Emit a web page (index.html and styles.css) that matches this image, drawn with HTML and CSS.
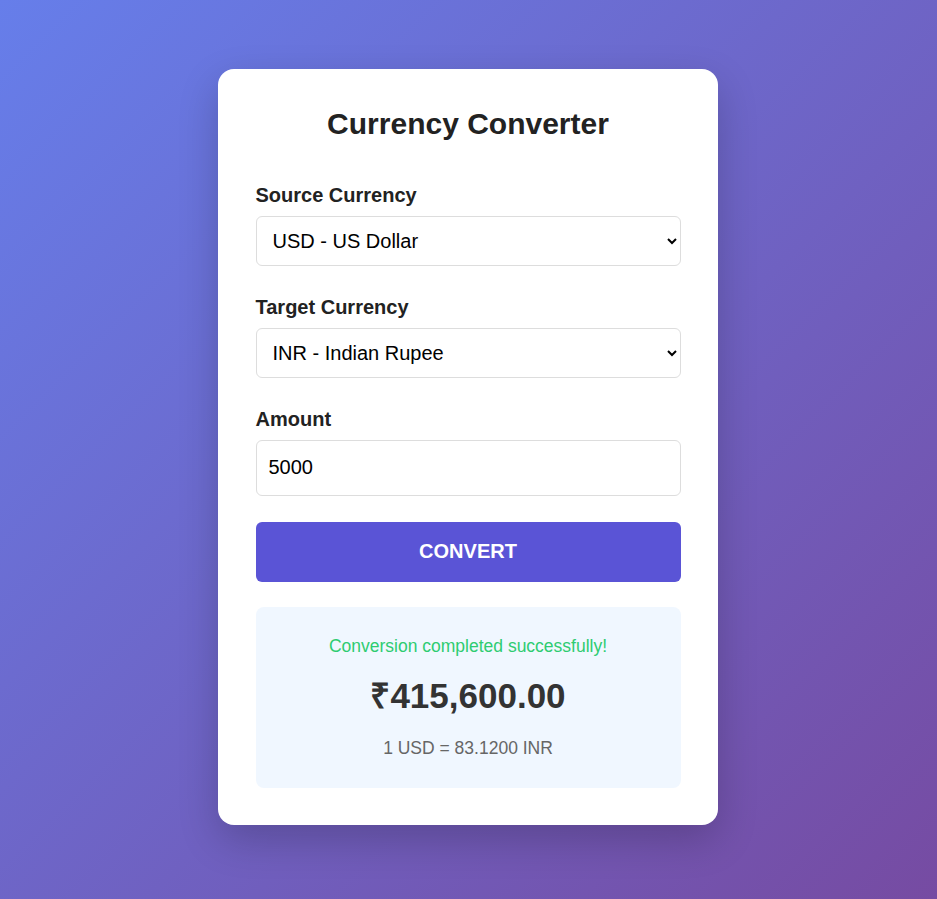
FILE: index.html
```html
<!DOCTYPE html>
<html lang="en">
<head>
<meta charset="utf-8">
<title>Currency Converter</title>
<link rel="stylesheet" href="styles.css">
</head>
<body>
<main class="card">
  <h1 class="title">Currency Converter</h1>
  <div class="field">
    <label class="label" for="src">Source Currency</label>
    <select class="select" id="src">
      <option>USD - US Dollar</option>
      <option>EUR - Euro</option>
      <option>INR - Indian Rupee</option>
    </select>
  </div>
  <div class="field">
    <label class="label" for="tgt">Target Currency</label>
    <select class="select" id="tgt">
      <option>INR - Indian Rupee</option>
      <option>USD - US Dollar</option>
      <option>EUR - Euro</option>
    </select>
  </div>
  <div class="field field-last">
    <label class="label" for="amt">Amount</label>
    <input class="input" id="amt" type="number" value="5000">
  </div>
  <button class="btn" type="button">Convert</button>
  <section class="result">
    <p class="status">Conversion completed successfully!</p>
    <p class="amount">₹415,600.00</p>
    <p class="rate">1 USD = 83.1200 INR</p>
  </section>
</main>
</body>
</html>
```

FILE: styles.css
```css
* { box-sizing: border-box; }

html, body { margin: 0; }

body {
  min-height: 100vh;
  padding: 69px 1px 69px 0;
  background: linear-gradient(135deg, #667eea 0%, #764ba2 100%);
  font-family: "Liberation Sans", Arial, sans-serif;
}

.card {
  width: 500px;
  margin: 0 auto;
  padding: 37.5px;
  background: #fff;
  border-radius: 16px;
  box-shadow: 0 15px 40px rgba(0, 0, 0, 0.2);
}

.title {
  margin: 0 0 43px;
  font-size: 30px;
  font-weight: 700;
  color: #222;
  text-align: center;
}

.field { margin-bottom: 30px; }
.field-last { margin-bottom: 26px; }

.label {
  display: block;
  margin-bottom: 9px;
  font-size: 20px;
  font-weight: 700;
  color: #222;
}

.select,
.input {
  display: block;
  width: 100%;
  border: 1px solid #ddd;
  border-radius: 6px;
  background: #fff;
  color: #000;
  font-family: "Liberation Sans", Arial, sans-serif;
  font-size: 20px;
}

.select {
  height: 50px;
  padding: 0 12px;
}

.input {
  height: 56px;
  padding: 0 12px;
}

.btn {
  display: block;
  width: 100%;
  height: 60px;
  margin-bottom: 25.5px;
  border: 0;
  border-radius: 6px;
  background: #5a54d6;
  color: #fff;
  font-family: "Liberation Sans", Arial, sans-serif;
  font-size: 20px;
  font-weight: 700;
  text-transform: uppercase;
}

.result {
  padding: 28.5px 20px 29px;
  background: #f0f7ff;
  border-radius: 8px;
  text-align: center;
}

.status {
  margin: 0 0 19.5px;
  font-size: 17.5px;
  color: #2ecc71;
}

.amount {
  margin: 0 0 21.5px;
  font-size: 35px;
  line-height: 40px;
  font-weight: 700;
  color: #333;
}

.rate {
  margin: 0;
  font-size: 17.5px;
  color: #666;
}
```
